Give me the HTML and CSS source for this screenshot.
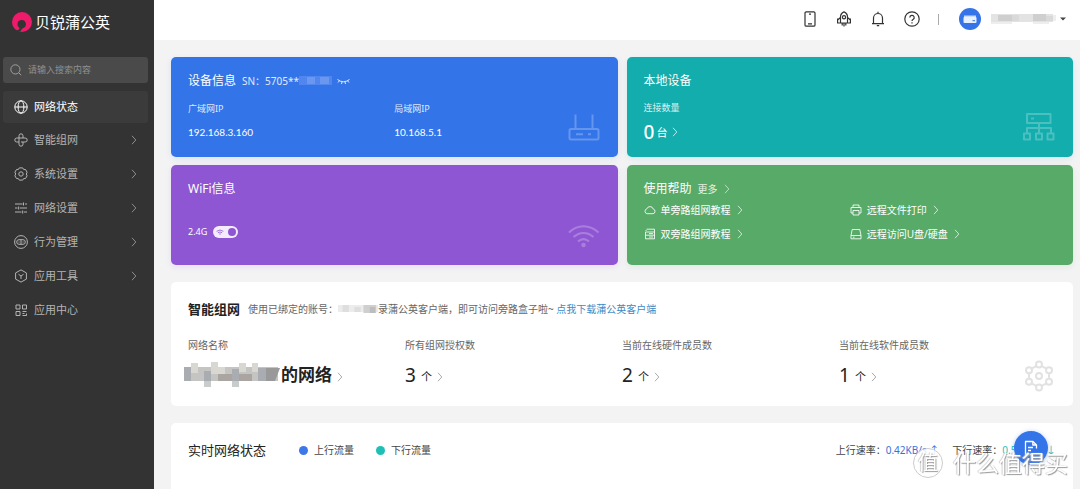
FILE: index.html
```
<!DOCTYPE html>
<html lang="zh-CN">
<head>
<meta charset="utf-8">
<meta name="viewport" content="width=device-width, initial-scale=1">
<title>贝锐蒲公英</title>
<link rel="stylesheet" href="styles.css">
</head>
<body>
<svg class="defs" aria-hidden="true">
  <symbol id="chevron" viewBox="0 0 6 10"><path d="M1 .8 4.800 5 1 9.200"/></symbol>
</svg>
<div class="app">
  <aside class="sidebar">
    <div class="brand">
      <svg class="brand-mark" viewBox="0 0 20 20"><circle cx="10" cy="10" r="10" fill="#ef1a6a"/><path d="M4.300 18.600C6 18.300 7.400 17.200 7.600 15.900 6 14.800 5.400 13.500 5.500 12.200a4.200 4.200 0 1 1 5.800 3.800c-1.300.9-1.700 1.100-2.300 2.400-.5 1.200-3 1.500-4.700.2z" fill="#333"/></svg>
      <span>贝锐蒲公英</span>
    </div>
    <label class="search">
      <svg viewBox="0 0 12 12"><circle cx="5.400" cy="5.400" r="4.600"/><path d="m8.800 8.800 2.400 2.400"/></svg>
      <input type="search" placeholder="请输入搜索内容" aria-label="搜索">
    </label>
    <nav class="nav">
      <a class="nav-item active" href="#"><svg class="ico" viewBox="0 0 14 14"><circle cx="7" cy="7" r="6.200"/><ellipse cx="7" cy="7" rx="2.900" ry="6.200"/><path d="M.8 7h12.400"/></svg><span>网络状态</span></a>
      <a class="nav-item" href="#"><svg class="ico" viewBox="0 0 14 14"><path d="M5 9V2.800a2 2 0 0 1 4 0V5H5M9 5h2.200a2 2 0 0 1 0 4H9M5 5H2.800a2 2 0 0 0 0 4H5M7 9h2v2.200a2 2 0 0 1-4 0V9"/></svg><span>智能组网</span><svg class="chev"><use href="#chevron"/></svg></a>
      <a class="nav-item" href="#"><svg class="ico" viewBox="0 0 14 14"><path d="M5.300.9h3.400l.9 1.500 1.900.1 1.600 2.700L12.300 7l.8 1.800-1.600 2.700-1.900.1-.9 1.500H5.300l-.9-1.500-1.900-.1L.9 8.800 1.700 7 .9 5.200l1.600-2.700 1.900-.1z"/><circle cx="7" cy="7" r="2.200"/></svg><span>系统设置</span><svg class="chev"><use href="#chevron"/></svg></a>
      <a class="nav-item" href="#"><svg class="ico" viewBox="0 0 14 14"><path d="M1 3h7.500M11 3h2M9.500 1.500v3M1 7h2.500M6 7h7M4.700 5.500v3M1 11h6.500M10 11h3M8.700 9.500v3"/></svg><span>网络设置</span><svg class="chev"><use href="#chevron"/></svg></a>
      <a class="nav-item" href="#"><svg class="ico" viewBox="0 0 14 14"><circle cx="7" cy="7" r="6.400"/><rect x="2.700" y="4.700" width="8.600" height="4.600" rx="2.300"/><path d="M7 4.700v4.600M5 6.500v1M9 6.500v1"/></svg><span>行为管理</span><svg class="chev"><use href="#chevron"/></svg></a>
      <a class="nav-item" href="#"><svg class="ico" viewBox="0 0 14 14"><path d="m7 .9 5.400 3v6.200L7 13.100l-5.400-3V3.900zM4.500 5.300 7 7l2.500-1.700M7 7v3"/></svg><span>应用工具</span><svg class="chev"><use href="#chevron"/></svg></a>
      <a class="nav-item" href="#"><svg class="ico" viewBox="0 0 14 14"><path d="M2 2h4v4H2zM8.500 2h4v4h-4zM2 8.500h4v4H2zM8.500 8.500h4M8.500 10.500h2M12.500 10.500v2h-4"/></svg><span>应用中心</span></a>
    </nav>
  </aside>

  <div class="page">
    <header class="topbar">
      <button class="tool" aria-label="手机"><svg viewBox="0 0 16 16"><rect x="3" y=".8" width="10" height="14.400" rx="1.300"/><path d="M7 3.200h2M6 12.800h4"/></svg></button>
      <button class="tool" aria-label="加速"><svg viewBox="0 0 16 16"><path d="M4.500 12V6C4.500 3.600 6.500 1.600 8 .9c1.500.7 3.500 2.700 3.500 5.100v6zM4.500 6.500 1.600 9v3h2.900M11.500 6.500 14.400 9v3h-2.900M1.600 7.500V9M14.400 7.500V9M6.200 12v2.500M8 12v3.500M9.800 12v2.500"/><circle cx="8" cy="6.300" r="1.600"/></svg></button>
      <button class="tool" aria-label="通知"><svg viewBox="0 0 16 16"><path d="M2 12.600h12M3.500 12.600V7a4.500 4.500 0 0 1 9 0v5.600M8 2.500V.8M6.800 14.700h2.400"/></svg></button>
      <button class="tool" aria-label="帮助"><svg viewBox="0 0 16 16"><circle cx="8" cy="8" r="7.200"/><path d="M5.800 6.500a2.200 2.200 0 1 1 3.200 2C8.200 8.900 8 9.200 8 10M8 11.300v1.200"/></svg></button>
      <i class="divider"></i>
      <button class="account" aria-label="账号">
        <svg class="avatar" viewBox="0 0 22 22"><circle cx="11" cy="11" r="11" fill="#3573e8"/><path d="M5 7.500h12v3.500H5z" fill="#c9dcff"/><rect x="4.500" y="9" width="13" height="6" rx="1" fill="#e7f0ff"/><path d="M13.500 12.700h2.500" stroke="#3573e8"/></svg>
        <svg class="mask-user" viewBox="0 0 66 12"><path fill="#e3e3e3" d="M0 1h62v8H0z"/><path fill="#cfcfcf" d="M7 2h14v6H7zM42 1h13v7H42z"/><path fill="#d9d9d9" d="M21 2h7v6h-7zM55 3h7v5h-7z"/><path fill="#eee" d="M0 9h21v2H0zM42 9h16v2H42zM62 2h3v6h-3z"/></svg>
        <svg class="caret" viewBox="0 0 6 4"><path d="M0 .5h6L3 3.500z" fill="#444"/></svg>
      </button>
    </header>

    <main class="content">
      <div class="cards">
        <section class="card blue">
          <div class="card-head">
            <h2>设备信息</h2>
            <span class="sn">SN：5705**</span>
            <svg class="mask-sn" viewBox="0 0 33 10"><path fill="#5086ed" d="M0 0h33v9H0z"/><path fill="#6a98f0" d="M8 1h8v7H8zM21 1h9v7h-9z"/></svg>
            <button class="eye" aria-label="显示序列号"><svg viewBox="0 0 13 7"><path d="M.5 1.500Q6.500 6 12.500 1.500M2.300 3 1 4.500M5 4l-.5 2M8 4l.5 2M10.700 3 12 4.500"/></svg></button>
          </div>
          <dl class="pair">
            <div><dt>广域网IP</dt><dd>192.168.3.160</dd></div>
            <div><dt>局域网IP</dt><dd>10.168.5.1</dd></div>
          </dl>
          <svg class="deco" viewBox="0 0 32 32"><rect x="1.500" y="17" width="29" height="10.500" rx="1.500"/><path d="M7.500 17V2.500M24.500 17V2.500M8 22.300h7M20 22.300h3"/></svg>
        </section>

        <section class="card teal">
          <div class="card-head"><h2>本地设备</h2></div>
          <p class="label">连接数量</p>
          <a class="count" href="#"><b>0</b><span>台</span><svg class="chev"><use href="#chevron"/></svg></a>
          <svg class="deco" viewBox="0 0 32 32"><path d="M4 2h23.500v9H4zM8 6.500h3M16 11v10.500M4 21.500V16h24v5.500M1 21.500h6v6H1zM13 21.500h6v6h-6zM24.500 21.500h6v6h-6z"/></svg>
        </section>

        <section class="card purple">
          <div class="card-head"><h2>WiFi信息</h2></div>
          <label class="wifi"><span>2.4G</span>
            <span class="switch"><input type="checkbox" checked><svg viewBox="0 0 10 8"><path d="M.8 2.500q4.200-3.200 8.400 0M2.400 4.300q2.600-2 5.200 0M4 6q1-.8 2 0"/></svg></span>
          </label>
          <svg class="deco" viewBox="0 0 32 32"><path d="M1 12.500C9 4 22 4 30.500 12.500M5.500 17c6-5.500 14-5.500 20 0M10 21.500c3.500-3 7.500-3 11 0"/><circle cx="15.500" cy="25" r="1.200"/></svg>
        </section>

        <section class="card green">
          <div class="card-head"><h2>使用帮助</h2><a class="more" href="#">更多<svg class="chev"><use href="#chevron"/></svg></a></div>
          <div class="help">
            <a href="#"><svg class="hico" viewBox="0 0 12 12"><path d="M3.200 9.700a2.500 2.500 0 0 1-.3-4.900 3.300 3.300 0 0 1 6.300.2 2.400 2.400 0 0 1-.2 4.700z"/></svg>单旁路组网教程<svg class="chev"><use href="#chevron"/></svg></a>
            <a href="#"><svg class="hico" viewBox="0 0 12 12"><path d="M3 3.500V1h6v2.500M3 9H1V3.500h10V9H9M3 6.500h6V11H3z"/></svg>远程文件打印<svg class="chev"><use href="#chevron"/></svg></a>
            <a href="#"><svg class="hico" viewBox="0 0 12 12"><path d="M2.500 1.200h8v9.600h-9V4M1.500 4h9M1.500 7.200h9M5 5.600h4M5 9h4M1.500 2.500h1"/></svg>双旁路组网教程<svg class="chev"><use href="#chevron"/></svg></a>
            <a href="#"><svg class="hico" viewBox="0 0 12 12"><path d="M2.200 1.500h7.600L11 7.500v3.300H1V7.500zM1 7.500h10M3 9.200h1.500"/></svg>远程访问U盘/硬盘<svg class="chev"><use href="#chevron"/></svg></a>
          </div>
        </section>
      </div>

      <section class="panel network">
        <div class="panel-head">
          <h2>智能组网</h2>
          <p>使用已绑定的账号：<svg class="mask-account" viewBox="0 0 44 10" preserveAspectRatio="none"><path fill="#ececec" d="M0 1h44v7H0z"/><path fill="#dedede" d="M5 1h7v7H5zM18 3h7v5h-7z"/><path fill="#cfcfcf" d="M28 1h14v8H28z"/><path fill="#bdbdbd" d="M35 3h6v6h-6z"/></svg>录蒲公英客户端，即可访问旁路盒子啦~ <a href="#">点我下载蒲公英客户端</a></p>
        </div>
        <div class="stats">
          <div><p>网络名称</p><a class="stat name" href="#"><svg class="mask-name" viewBox="0 0 98 26"><path fill="#c4c4c2" d="M0 5h94v14H0z"/><path fill="#a9adb1" d="M0 5h7v14H0zM20 9h7v10h-7zM48 7h7v12h-7zM74 6h8v13h-8z"/><path fill="#d9d7d2" d="M7 1h7v10H7zM27 0h7v12h-7zM34 5h7v7h-7zM55 1h7v9h-7zM68 1h6v9h-6z"/><path fill="#aaa5a1" d="M34 12h14v7H34zM55 12h13v7H55z"/><path fill="#c9cccd" d="M20 19h7v6h-7zM48 19h7v6h-7z"/><path fill="#999" d="M82 6h14l-5 13h-9z"/></svg><b>的网络</b><svg class="chev"><use href="#chevron"/></svg></a></div>
          <div><p>所有组网授权数</p><a class="stat" href="#"><b>3</b><span>个</span><svg class="chev"><use href="#chevron"/></svg></a></div>
          <div><p>当前在线硬件成员数</p><a class="stat" href="#"><b>2</b><span>个</span><svg class="chev"><use href="#chevron"/></svg></a></div>
          <div><p>当前在线软件成员数</p><a class="stat" href="#"><b>1</b><span>个</span><svg class="chev"><use href="#chevron"/></svg></a></div>
        </div>
        <svg class="deco" viewBox="0 0 32 32"><circle cx="16" cy="16" r="3"/><circle cx="16" cy="4.500" r="3"/><circle cx="26" cy="10.200" r="3"/><circle cx="26" cy="21.800" r="3"/><circle cx="16" cy="27.500" r="3"/><circle cx="6" cy="21.800" r="3"/><circle cx="6" cy="10.200" r="3"/><path d="m18.600 6 4.800 2.700M26 13.200v5.600M23.400 23.300 18.600 26M13.400 26l-4.800-2.700M6 18.800v-5.600M8.600 8.700 13.400 6"/></svg>
      </section>

      <section class="panel traffic">
        <h2>实时网络状态</h2>
        <span class="legend up">上行流量</span>
        <span class="legend down">下行流量</span>
        <span class="rates"><span>上行速率：<b class="rate-up">0.42KB/s ↑</b></span><span>下行速率：<b class="rate-down">0.56KB/s ↓</b></span></span>
      </section>
    </main>
  </div>
</div>
<button class="fab" aria-label="反馈"><svg viewBox="0 0 16 16"><path d="M13.500 8.500V5L10 1.500H2.500v13h6M9.800 1.500V5h3.700M5 7.500h5M5 10.500h3"/></svg></button>
<div class="watermark"><span class="seal">值</span><span>什么值得买</span></div>
</body>
</html>
```
FILE: styles.css
```
* { box-sizing: border-box; }
body, h2, p, dl, dd { margin: 0; }
body {
  font: 10px/14px "Noto Sans", "Noto Sans CJK SC", sans-serif;
  color: #444;
  background: #f3f3f4;
}
button { padding: 0; border: 0; background: none; color: inherit; display: flex; align-items: center; }
a { color: inherit; text-decoration: none; }
svg { flex: none; fill: none; stroke-linejoin: round; }
.defs { display: none; }
.app { display: flex; height: 100vh; overflow: hidden; }

.chev { width: 6px; height: 10px; stroke: currentColor; opacity: .7; }

/* Sidebar */
.sidebar { width: 154px; flex: none; padding: 11px 6px 0 3px; background: #333; color: #b4b4b4; }
.brand { display: flex; align-items: center; gap: 3px; height: 22px; padding-left: 9px; font-size: 15px; color: #fff; }
.brand-mark { width: 20px; height: 20px; }
.search { display: flex; align-items: center; gap: 6px; height: 26px; margin-top: 24px; padding: 0 7px; border-radius: 3px; background: #4a4a4a; }
.search svg { width: 12px; height: 12px; stroke: #a0a0a0; }
.search input { min-width: 0; flex: 1; padding: 0; border: 0; outline: 0; background: none; font: inherit; font-size: 9px; color: #ddd; }
.search input::placeholder { color: #909090; }
.nav { margin-top: 8px; font-size: 11px; }
.nav-item { display: flex; align-items: center; gap: 6px; height: 34px; padding: 0 11px; }
.nav-item .ico { width: 14px; height: 14px; stroke: currentColor; }
.nav-item .chev { margin-left: auto; }
.nav-item.active { height: 32px; border-radius: 3px; background: #3b3b3b; color: #fff; }

/* Top bar */
.page { flex: 1; min-width: 0; display: flex; flex-direction: column; }
.topbar { display: flex; align-items: center; justify-content: flex-end; height: 40px; padding: 0 14px 2px 0; flex: none; background: #fff; }
.tool { margin-right: 18px; }
.tool svg { width: 16px; height: 16px; stroke: #333; stroke-width: 1.2; }
.divider { width: 1px; height: 11px; margin-right: 20px; background: #aaa; }
.avatar { width: 22px; height: 22px; margin-right: 10px; }
.mask-user { width: 66px; height: 12px; margin-right: 3px; }
.caret { width: 6px; height: 4px; }

/* Cards */
.content { flex: 1; min-height: 0; display: flex; flex-direction: column; gap: 17px; padding: 17px 7px 0 17px; }
.cards { display: grid; grid-template-columns: 1fr 1fr; gap: 8px 9px; }
.card, .panel { position: relative; border-radius: 5px; padding: 16px 17px 0; }
.card { min-height: 100px; color: #fff; }
.blue { background: #3375e9; box-shadow: 0 2px 6px #3375e91f; }
.teal { background: #12adac; box-shadow: 0 2px 6px #12adac1f; }
.purple { background: #8f56d3; box-shadow: 0 2px 6px #8f56d31f; }
.green { background: #57aa68; box-shadow: 0 2px 6px #57aa681f; }
.card-head { display: flex; align-items: center; height: 16px; }
.card h2 { font-size: 12px; line-height: 16px; font-weight: 400; }
.sn { margin-left: 6px; font-size: 10px; opacity: .85; }
.mask-sn { width: 33px; height: 10px; }
.eye { margin-left: 5px; }
.eye svg { width: 13px; height: 7px; stroke: #e2ebfc; }
.pair { display: grid; grid-template-columns: 1fr 1fr; margin-top: 13px; }
dt, .label { font-size: 9px; line-height: 14px; color: #ffffffd9; }
dd { margin-top: 7px; font: 10px/18px Lato, sans-serif; }
.label { margin-top: 12px; }
.count { display: inline-flex; align-items: center; margin-top: 5px; line-height: 20px; }
.count b { font-size: 19px; font-weight: 500; }
.count span { margin: 3px 5px 0 2px; font-size: 11px; }
.deco { position: absolute; right: 18px; bottom: 13px; width: 32px; height: 32px; stroke: #fff; stroke-width: 2; opacity: .24; }
.wifi { display: inline-flex; align-items: center; gap: 6px; margin-top: 28px; font-size: 9px; }
.switch { display: grid; }
.switch > * { grid-area: 1 / 1; align-self: center; }
.switch input { appearance: none; width: 25px; height: 12px; margin: 0; padding: 2px; border-radius: 6px; background: #f3ecfb; display: flex; justify-content: flex-end; }
.switch input::before { content: ""; width: 8px; height: 8px; border-radius: 50%; background: #8f56d3; }
.switch input:not(:checked) { justify-content: flex-start; }
.switch svg { width: 8px; height: 7px; margin-left: 3px; stroke: #8f56d3; pointer-events: none; }
.more { display: flex; align-items: center; gap: 6px; margin-left: 6px; opacity: .85; }
.help { display: grid; grid-template-columns: 1fr 1fr; row-gap: 10px; margin-top: 6px; }
.help a { display: flex; align-items: center; gap: 6px; }
.hico { width: 12px; height: 12px; margin-right: -1px; stroke: #ffffffd9; }

/* White panels */
.panel { background: #fff; }
.panel h2 { font-size: 13px; line-height: 18px; color: #222; }
.network { padding-top: 18px; min-height: 124px; flex: none; }
.panel-head { display: flex; align-items: center; gap: 8px; }
.panel-head p { color: #666; }
.panel-head a { color: #3c8ac4; }
.mask-account { width: 40px; height: 10px; vertical-align: -1px; }
.stats { display: grid; grid-template-columns: repeat(4, 1fr); margin-top: 20px; color: #666; }
.stat { display: inline-flex; align-items: center; height: 26px; margin-top: 10px; color: #222; }
.stat b { font-size: 19px; font-weight: 400; }
.stat span { margin: 3px 5px 0 5px; font-size: 11px; }
.stat .chev { margin-top: 4px; stroke: #888; }
.stat.name { margin-left: -4px; }
.stat.name b { font-size: 17px; font-weight: 700; margin: 0 5px 0 -1px; }
.mask-name { width: 98px; height: 26px; }
.network .deco { bottom: 14px; stroke: #888; }
.traffic { flex: 1; display: flex; align-items: flex-start; padding-top: 18px; border-radius: 5px 5px 0 0; line-height: 18px; }
.traffic h2 { font-weight: 400; margin-right: 33px; }
.legend { display: flex; align-items: center; gap: 6px; margin-right: 22px; }
.legend::before { content: ""; width: 9px; height: 9px; border-radius: 50%; background: currentColor; }
.legend.up::before { background: #3d78e8; }
.legend.down::before { background: #1fbfb8; }
.rates { display: flex; gap: 13px; margin-left: auto; }
.rates b { font-weight: 400; }
.rate-up { color: #3573d8; }
.rate-down { color: #1fbfb8; }

/* Floating layer */
.fab { position: fixed; right: 32px; bottom: 24px; width: 34px; height: 34px; justify-content: center; border-radius: 50%; background: #3375e9; box-shadow: 0 1px 5px #3375e966; }
.fab svg { width: 16px; height: 16px; stroke: #fff; stroke-width: 1.3; }
.watermark { position: fixed; right: 12px; bottom: 10px; display: flex; align-items: center; gap: 10px; font-size: 23px; line-height: 32px; color: #fff; text-shadow: 1px 1px 1px #999, -1px 0 1px #ccc; pointer-events: none; }
.seal { width: 30px; height: 30px; border: 1px solid #ccc; border-radius: 50%; background: #ffffffd9; font-size: 20px; line-height: 27px; text-align: center; }
```
